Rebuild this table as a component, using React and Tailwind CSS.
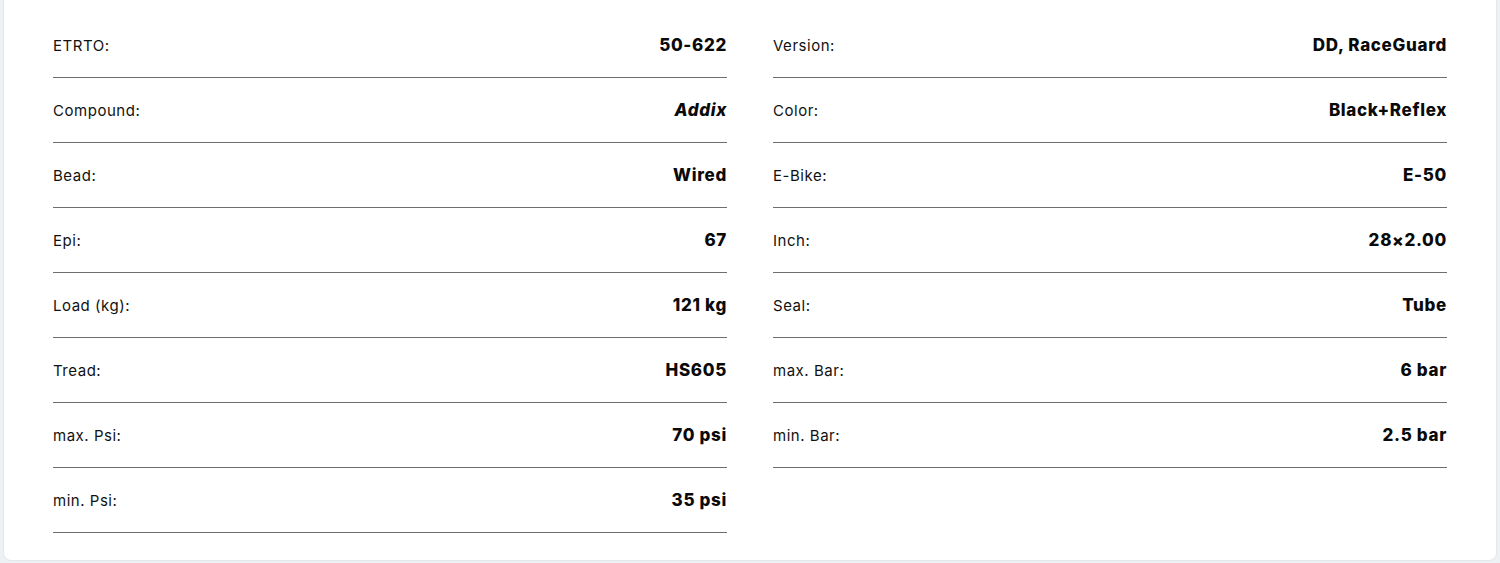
import React from 'react';

// Tyre spec sheet, two columns of label/value rows
const leftSpecs = [
  ['ETRTO:', '50-622'],
  ['Compound:', 'Addix'],
  ['Bead:', 'Wired'],
  ['Epi:', '67'],
  ['Load (kg):', '121 kg'],
  ['Tread:', 'HS605'],
  ['max. Psi:', '70 psi'],
  ['min. Psi:', '35 psi'],
];

const rightSpecs = [
  ['Version:', 'DD, RaceGuard'],
  ['Color:', 'Black+Reflex'],
  ['E-Bike:', 'E-50'],
  ['Inch:', '28×2.00'],
  ['Seal:', 'Tube'],
  ['max. Bar:', '6 bar'],
  ['min. Bar:', '2.5 bar'],
];

const SpecRow = ({ label, value }) => (
  <div className="flex h-[65px] items-center justify-between border-b border-[#6e6e6e]">
    <span className="pt-[3px] text-[15px] tracking-[0.035em] text-[#111]">{label}</span>
    <span
      className={`pt-px text-[17px] font-extrabold tracking-[0.04em] text-[#0a0a0a] ${value === 'Addix' ? 'italic' : ''}`}
    >
      {value}
    </span>
  </div>
);

const SpecColumn = ({ specs }) => (
  <div className="flex flex-col">
    {specs.map(([label, value]) => (
      <SpecRow key={label} label={label} value={value} />
    ))}
  </div>
);

export default function App() {
  return (
    <div className="h-[563px] w-[1500px] bg-[#eef1f4] px-[3px] pb-[2px]" style={{ fontFamily: 'Inter, "Liberation Sans", sans-serif' }}>
      <div className="h-full rounded-b-[8px] border-x border-b border-[#e3e7ec] bg-white px-[49px] pt-[13px]">
        <div className="grid grid-cols-2 gap-[46px]">
          <SpecColumn specs={leftSpecs} />
          <SpecColumn specs={rightSpecs} />
        </div>
      </div>
    </div>
  );
}
